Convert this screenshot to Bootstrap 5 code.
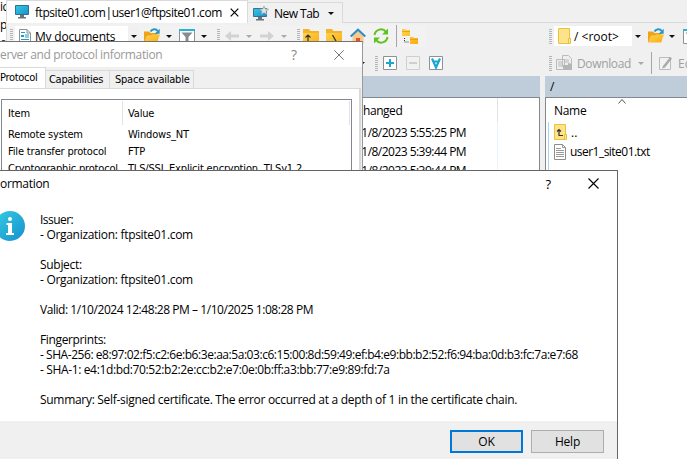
<!DOCTYPE html>
<html lang="en">
<head>
<meta charset="utf-8">
<title>Certificate information</title>
<link href="https://cdn.jsdelivr.net/npm/bootstrap@5.3.0/dist/css/bootstrap.min.css" rel="stylesheet">
<style>
body{width:687px;height:459px;background:#fff;color:#000;font:12px/15px "Open Sans","Noto Sans",sans-serif;overflow:hidden}
svg{display:block;flex:none}
.s3{letter-spacing:-.3px}.s45{letter-spacing:-.45px}.s54{letter-spacing:-.53px}.s2{letter-spacing:-.2px}.s36{letter-spacing:-.36px}
.behind{width:6px;letter-spacing:-.6px}
.behind div{height:18px;line-height:13px;white-space:nowrap}
.app{background:#f0f0f0;min-width:0}
.tabs{height:23px;border-bottom:1px solid #d9d9d9}
.tab-on{width:242px;height:23px;background:#fff;border:1px solid #dadada;border-bottom:0;padding:0 8px 0 8px}
.tab-on .s45{margin-left:6px}
.tab-new{width:95px;height:21px;margin-top:2px;border:1px solid #d9d9d9;border-left:0;border-bottom:0;padding:0 8px 0 5px;background:#f1f1f1}
.tab-new .s54{margin-left:5px}
.bar{display:grid;align-items:center;height:22px;margin-top:2px;white-space:nowrap}
.bar-a{grid-template-columns:5px 129px 22px 13px 22px 16px 8px 21px 14px 21px 16px 6px 23px 24px 23px 23px 6px 18px;padding-left:4px;background:#f2f2f2;width:421px;border-left:1px solid #dadada;padding-left:3px}
.bar-b{grid-template-columns:12px 8px 23px 23px 18px;padding-left:357px;width:442px;margin-top:5px}
.bar-c{grid-template-columns:5px 94px 21px 14px 20px;padding-left:4px}
.bar-d{grid-template-columns:7px 21px 61px 13px 8px 19px 20px;padding-left:4px;margin-top:5px;color:#a0a0a0}
.grip{width:3px;height:15px;background:repeating-linear-gradient(#b5b5b5 0 1px,transparent 1px 2px)}
.arr{width:0;height:0;border:3px solid transparent;border-top-color:#111;border-bottom:0}
.arr.dim{border-top-color:#aaa}
.vsep{width:1px;height:22px;background:#a5a5a5}
.combo{height:20px;background:#fff;padding-left:4px}
.combo-btn{width:11px;height:20px;background:#f0f0f0}
.combo-l{width:124px}.combo-r{width:89px}
.pathbar{height:22px;background:#bfcddb;margin-top:2px;border-bottom:1px solid #828790;padding:3px 5px}
.panel-l{width:534px}
.list{background:#fff;border:0 solid #828790}
.list-l{border-right-width:1px;padding-left:349px}
.list-r{border-left-width:1px}
.col-end{width:1px;height:24px;background:#e3e3e3}
.col-run{width:1px;background:#e8f3fb}
.stamp{height:19px;line-height:19px}
.blueline{width:1px;height:48px;background:#a9d1f5;margin-left:2px}
/* server information dialog */
.dlg-info{left:0;top:41px;width:363px;height:130px;background:#f0f0f0;border-top:1px solid #727272;border-right:1px solid #999;font:11px/14px "DejaVu Sans Condensed","DejaVu Sans",sans-serif}
.dlg-info .cap-a{height:25px;background:#fff;color:#999;font:12px/24px "Open Sans",sans-serif;padding-right:18px}
.q-dim{font-size:14px;margin-right:37px;color:#888}
.tabset{height:21px;padding-top:2px}
.tb{height:18px;border:1px solid #d9d9d9;border-left:0;border-bottom:0;line-height:18px;white-space:nowrap;background:#f0f0f0}
.tb-on{width:46px;height:21px;margin-top:-1px;background:#fff;line-height:19px;letter-spacing:-.3px}
.tb-cap{width:64px;padding-left:3px;letter-spacing:-.3px}
.tb-space{width:84px;padding-left:5px;letter-spacing:-.23px}
.sheet{background:#fff;border:1px solid #d9d9d9;border-left:0;border-right-width:2px;width:361px;height:84px;padding:10px 7px 0 1px}
.grid-box{border:1px solid #828790;border-bottom:0;height:75px;width:351px}
.props{display:grid;grid-template-columns:120px 1fr;padding-left:6px;white-space:nowrap;letter-spacing:-.17px;background:linear-gradient(#e3e3e3,#e3e3e3) 120px 1px/1px 24px no-repeat,linear-gradient(#e3e3e3,#e3e3e3) 347px 1px/1px 24px no-repeat}
.props>*{height:17px;line-height:17px}
.props>.hd{height:26px;line-height:27px}
/* certificate dialog */
.dlg-cert{left:0;top:170px;width:618px;height:289px;background:#fff;border-top:1px solid #656565;border-right:1px solid #656565}
.cap-b{height:25px;line-height:24px;padding-right:18px}
.q-dark{font-size:13px;margin-right:37px}
.cert{padding:16px 0 0;height:225px;white-space:nowrap}
.cert>svg{margin-top:-1px}
.cert-text{margin-left:15px}
.foot{background:#f0f0f0;height:38px;padding:9px 13px 0 0}
.dbtn{width:73px;height:23px;padding:0;border:1px solid #adadad;border-radius:0;background:#e1e1e1;color:#000;font:12px/20px "Open Sans",sans-serif;letter-spacing:-.2px}
.dbtn.main{border:2px solid #0078d7;line-height:18px}
</style>
<script src="https://cdn.jsdelivr.net/npm/bootstrap@5.3.0/dist/js/bootstrap.bundle.min.js"></script>
</head>
<body class="d-flex position-relative">
<svg width="0" height="0" class="position-absolute"><defs>
<linearGradient id="gold" x1="0" y1="0" x2="1" y2="1"><stop stop-color="#ffd34d"/><stop offset="1" stop-color="#f9ae14"/></linearGradient>
<linearGradient id="cyan" x1="0" y1="0" x2="1" y2="1"><stop stop-color="#35cde0"/><stop offset="1" stop-color="#168fd0"/></linearGradient>
<symbol id="open" viewBox="0 0 16 16"><path d="M0 3.500h5l1.500 1.500h7V14H0z" fill="#eda31c"/><path d="M0 14.500 3 7.500h4l1-1h8L13 14.500z" fill="url(#gold)"/><path d="M6.500 3.500C8.500 .5 12 .7 13.700 3" fill="none" stroke="#2196cf" stroke-width="2"/><path d="M15.700.7v5h-5z" fill="#2196cf"/></symbol>
<symbol id="filter" viewBox="0 0 16 16"><path d="M.5 1.500h15v14H.5z" fill="#fff" stroke="#8c9298"/><path d="M0 1h16v2H0z" fill="#25b3d6"/><path d="M2.500 4.500h11L9.500 9v6h-3V9z" fill="#858b91"/></symbol>
<symbol id="folder" viewBox="0 0 16 16"><path d="M0 1h6l1.500 2H16v13H0z" fill="#f5b32d"/><path d="M0 5h16v11H0z" fill="url(#gold)"/></symbol>
</defs></svg>

<div class="behind flex-shrink-0 overflow-hidden">
  <div>ic</div><div>p</div><div>er</div>
</div>
<main class="app d-flex flex-column flex-grow-1">
  <nav class="tabs d-flex">
    <div class="tab-on d-flex align-items-center">
      <svg width="14" height="14" viewBox="0 0 14 14"><path d="M.5.5h13v9H.5z" fill="url(#cyan)" stroke="#3b6d8c"/><path d="M5 10h4v2H5zM3 12h8v1.500H3z" fill="#68747d"/></svg>
      <span class="s45 me-auto">ftpsite01.com|user1@ftpsite01.com</span>
      <svg width="9" height="9" viewBox="0 0 9 9"><path d="m.7.7 7.600 7.600m0-7.600L.7 8.300" stroke="#000" stroke-width="1.200"/></svg>
    </div>
    <div class="tab-new d-flex align-items-center">
      <svg width="16" height="15" viewBox="0 0 16 15"><path d="M.5 2.500h13v8H.5z" fill="url(#cyan)" stroke="#3b6d8c"/><path d="M5 11h4v2H5zM3 13h8v1.500H3z" fill="#68747d"/><path d="m11 0 1.300 2.900 3.200.3-2.400 2.100.7 3.200L11 6.800 8.200 8.500l.7-3.200L6.500 3.200l3.200-.3z" fill="#dce3e8" stroke="#8e999f" stroke-width=".7"/></svg>
      <span class="s54 me-auto">New Tab</span>
      <i class="arr"></i>
    </div>
  </nav>
  <div class="d-flex flex-grow-1">
    <section class="panel-l d-flex flex-column flex-shrink-0">
      <div class="bar bar-a">
        <i class="grip"></i>
        <div class="combo combo-l d-flex align-items-center">
          <svg width="12" height="15" viewBox="0 0 12 15"><path d="M.5.5h7.500l3.500 3.500v10.500H.5z" fill="#fff" stroke="#8c9298"/><path d="M8 .5V4h3.500" fill="none" stroke="#8c9298"/><path d="M2 6h3v2H2zM6 5.500h4v1H6zM6 7.500h4v1H6zM2 10h8v1H2zM2 12h6v1H2zM2 3h4v1H2z" fill="#2299c9"/></svg>
          <span class="s2 ms-1 me-auto">My documents</span>
          <span class="combo-btn d-flex align-items-center justify-content-center"><i class="arr"></i></span>
        </div>
        <svg width="16" height="16"><use href="#open"/></svg>
        <i class="arr"></i>
        <svg width="16" height="16"><use href="#filter"/></svg>
        <i class="arr"></i>
        <i class="grip"></i>
        <svg width="15" height="10" viewBox="0 0 15 10"><path d="m0 5 6-5v3.500h8v3H6V10z" fill="#d2d2d2"/></svg>
        <i class="arr dim"></i>
        <svg width="14" height="10" viewBox="0 0 14 10"><path d="M14 5 8 0v3.500H0v3h8V10z" fill="#d2d2d2"/></svg>
        <i class="arr dim"></i>
        <i class="grip"></i>
        <svg width="16" height="16" viewBox="0 0 16 16"><use href="#folder" width="16" height="16"/><path d="M5 13.500V7m-2.500 2.500L5 7l2.500 2.500M4.500 13.500H13" fill="none" stroke="#333" stroke-width="1.200"/></svg>
        <svg width="16" height="16" viewBox="0 0 16 16"><use href="#folder" width="16" height="16"/><path d="m6.500 7 4 7" stroke="#333" stroke-width="1.300"/></svg>
        <svg width="16" height="16" viewBox="0 0 16 16"><path d="M2.500 8 8 3l5.500 5v8h-11z" fill="#f8c98a"/><path d="M6 10h4v6H6z" fill="#e34f26"/><path d="M.7 8.500 8 1.700l7.300 6.800" fill="none" stroke="#288fc5" stroke-width="2"/></svg>
        <svg width="16" height="16" viewBox="0 0 16 16"><path d="M1.500 7A6.500 6.500 0 0 1 13 3.800M14.500 9A6.500 6.500 0 0 1 3 12.200" fill="none" stroke="#5fc31e" stroke-width="2"/><path d="M15 .5v6H9zM1 15.500v-6h6z" fill="#5fc31e"/></svg>
        <i class="vsep"></i>
        <svg width="16" height="17" viewBox="0 0 16 17"><path d="M0 1h3l1 1h4v6H0zM8 9h3l1 1h4v6H8z" fill="url(#gold)"/><path d="M0 4h8v-.8H0zM8 12h8v-.8H8z" fill="#e39c12"/><path d="M2.500 10v4H7" fill="none" stroke="#333" stroke-dasharray="1 1"/></svg>
      </div>
      <div class="bar bar-b">
        <span class="overflow-hidden"><i class="arr d-block" style="margin-left:-4px"></i></span>
        <i class="grip"></i>
        <svg width="14" height="14" viewBox="0 0 14 14"><path d="M.5.5h13v13H.5z" fill="#fff" stroke="#8c9298"/><path d="M3 7h8M7 3v8" stroke="#1ea6d2" stroke-width="2"/></svg>
        <svg width="14" height="14" viewBox="0 0 14 14"><path d="M.5.5h13v13H.5z" fill="#f1f1f1" stroke="#cfcfcf"/><path d="M3 7h8" stroke="#cfcfcf" stroke-width="2"/></svg>
        <svg width="14" height="14" viewBox="0 0 14 14"><path d="M.5.5h13v13H.5z" fill="#fff" stroke="#8c9298"/><path d="m3 2.500 4 9 4-9M4.200 5.500h5.600" fill="none" stroke="#1ea6d2" stroke-width="2.200"/></svg>
      </div>
      <div class="pathbar"></div>
      <div class="list list-l d-flex flex-grow-1">
        <div class="text-nowrap" style="padding-top:5px">
          <div class="s45 ps-2 pb-1" style="height:20px">hanged</div>
          <div class="stamp s54">11/8/2023 5:55:25 PM</div>
          <div class="stamp s54">11/8/2023 5:39:44 PM</div>
          <div class="stamp s54">11/8/2023 5:39:44 PM</div>
        </div>
        <div class="ms-auto d-flex flex-column" style="margin-right:41px"><div class="col-end"></div><div class="col-run flex-grow-1"></div></div>
      </div>
    </section>
    <section class="d-flex flex-column flex-grow-1" style="margin-left:5px;min-width:0">
      <div class="bar bar-c">
        <i class="grip"></i>
        <div class="combo combo-r d-flex align-items-center">
          <svg width="13" height="16" viewBox="0 0 13 16"><path d="M.5.5h11v10h1v5H.5z" fill="#ffe38b" stroke="#e8c33b"/><path d="M10.500 15v-4.500h2" fill="none" stroke="#e8c33b"/></svg>
          <span class="me-auto" style="margin-left:3px">/ &lt;root&gt;</span>
          <span class="combo-btn d-flex align-items-center justify-content-center"><i class="arr"></i></span>
        </div>
        <svg width="16" height="16"><use href="#open"/></svg>
        <i class="arr"></i>
        <svg width="16" height="16"><use href="#filter"/></svg>
      </div>
      <div class="bar bar-d">
        <i class="grip"></i>
        <svg width="16" height="16" viewBox="0 0 16 16"><path d="M6.500.5h6l3 3v8h-9zM.5 4.500h8v10h-8z" fill="#eee" stroke="#bbb"/><path d="M2 7h5M2 9h5M2 11h4M8 5h5M8 7h5" stroke="#bbb"/><path d="M7 10h5V8l4 1v6H8l-1-2z" fill="#b5b5b5"/></svg>
        <span class="s36">Download</span>
        <i class="arr dim"></i>
        <i class="vsep"></i>
        <svg width="14" height="16" viewBox="0 0 14 16"><path d="M.5 2.500h11v12H.5z" fill="#f2f2f2" stroke="#bbb"/><path d="m4 11 7-9 2 1.500-7 9-3 1z" fill="#aaa"/></svg>
        <span>Edit</span>
      </div>
      <div class="pathbar">/</div>
      <div class="list list-r flex-grow-1 d-flex">
        <div class="pt-4"><div class="blueline"></div></div>
        <div class="flex-grow-1 text-nowrap" style="padding:5px 0 0 5px">
          <div class="s3 d-flex" style="height:19px"><span>Name</span>
            <svg class="ms-auto" style="margin-right:61px;margin-top:-4px" width="8" height="5" viewBox="0 0 8 5"><path d="m.5 4.500 3.500-4 3.500 4" fill="none" stroke="#555"/></svg></div>
          <div class="d-flex align-items-center" style="height:20px">
            <svg width="13" height="16" viewBox="0 0 13 16"><path d="M.5.5h11v10h1v5H.5z" fill="#ffe38b" stroke="#e8c33b"/><path d="M10.500 15v-4.500h2" fill="none" stroke="#e8c33b"/><path d="M5 11.500V5.500M3 7.500l2-2 2 2M4.500 11.500H9" fill="none" stroke="#333" stroke-width="1.200"/></svg>
            <span class="ms-1">..</span></div>
          <div class="d-flex align-items-center" style="height:19px">
            <svg width="12" height="16" viewBox="0 0 12 16"><path d="M.5.500h8l3 3v12H.5z" fill="#fff" stroke="#8c8c8c"/><path d="M8.500.5v3h3M2 4.500h5M2 6.500h8M2 8.500h8M2 10.500h8M2 12.500h8" fill="none" stroke="#999"/></svg>
            <span class="s54 ms-1">user1_site01.txt</span></div>
        </div>
      </div>
    </section>
  </div>
</main>

<div class="dlg-info position-absolute overflow-hidden">
  <div class="cap-a d-flex align-items-center">
    <span class="s36 me-auto">erver and protocol information</span>
    <span class="q-dim">?</span>
    <svg width="10" height="10" viewBox="0 0 10 10"><path d="m.3.3 9.400 9.400m0-9.400L.3 9.700" stroke="#777"/></svg>
  </div>
  <div class="tabset d-flex align-items-end">
    <div class="tb tb-on">Protocol</div>
    <div class="tb tb-cap">Capabilities</div>
    <div class="tb tb-space">Space available</div>
  </div>
  <div class="sheet">
    <div class="grid-box">
      <div class="props">
        <div class="hd">Item</div><div class="hd">Value</div>
        <div>Remote system</div><div>Windows_NT</div>
        <div>File transfer protocol</div><div>FTP</div>
        <div>Cryptographic protocol</div><div>TLS/SSL Explicit encryption, TLSv1.2</div>
      </div>
    </div>
  </div>
</div>

<div class="dlg-cert position-absolute">
  <div class="cap-b d-flex align-items-center">
    <span class="s3 me-auto">ormation</span>
    <span class="q-dark">?</span>
    <svg width="11" height="11" viewBox="0 0 11 11"><path d="m.5.5 10 10m0-10-10 10" stroke="#000" stroke-width="1.100"/></svg>
  </div>
  <div class="cert d-flex">
    <svg width="25" height="30" viewBox="5 0 25 30"><circle cx="15" cy="15" r="15" fill="url(#cyan)"/><circle cx="15" cy="8" r="2" fill="#fff"/><path d="M11.500 12H17v10h2v2h-8v-2h2v-8h-1.500z" fill="#fff"/></svg>
    <div class="cert-text">
      <div class="s54">Issuer:</div>
      <div class="s3">- Organization: ftpsite01.com</div><br>
      <div class="s3">Subject:</div>
      <div class="s3">- Organization: ftpsite01.com</div><br>
      <div class="s45">Valid: 1/10/2024 12:48:28 PM – 1/10/2025 1:08:28 PM</div><br>
      <div class="s36">Fingerprints:</div>
      <div class="s45">- SHA-256: e8:97:02:f5:c2:6e:b6:3e:aa:5a:03:c6:15:00:8d:59:49:ef:b4:e9:bb:b2:52:f6:94:ba:0d:b3:fc:7a:e7:68</div>
      <div class="s36">- SHA-1: e4:1d:bd:70:52:b2:2e:cc:b2:e7:0e:0b:ff:a3:bb:77:e9:89:fd:7a</div><br>
      <div class="s3">Summary: Self-signed certificate. The error occurred at a depth of 1 in the certificate chain.</div>
    </div>
  </div>
  <div class="foot d-flex justify-content-end gap-2">
    <button class="btn dbtn main">OK</button>
    <button class="btn dbtn">Help</button>
  </div>
</div>
</body>
</html>
